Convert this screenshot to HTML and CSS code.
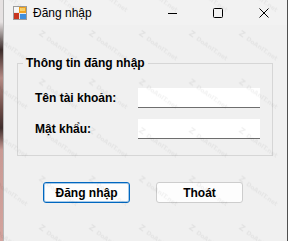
FILE: index.html
```html
<!DOCTYPE html>
<html lang="vi">

<head>
    <meta charset="UTF-8">
    <meta name="viewport" content="width=device-width, initial-scale=1.0">
    <title>Đăng nhập</title>
    <link rel="stylesheet" href="styles.css">
</head>

<body>
    <div class="screen">
        <div class="backdrop"></div>

        <div class="window">
            <div class="titlebar">
                <!-- icon mặc định của form -->
                <svg class="app-icon" viewBox="0 0 14 14" width="14" height="14">
                    <rect x="0.5" y="0.5" width="13" height="13" fill="#e9e9e9" stroke="#9c9c9c" />
                    <rect x="1" y="1" width="5" height="5" fill="#f7f7f7" />
                    <rect x="6" y="1" width="7" height="6" fill="#f2a31f" />
                    <rect x="7" y="2" width="5" height="3" fill="#fbd36a" />
                    <rect x="1" y="7" width="5" height="6" fill="#c8361f" />
                    <rect x="7" y="8" width="6" height="5" fill="#3f8fdd" />
                </svg>
                <span class="title">Đăng nhập</span>

                <div class="caption-buttons">
                    <span class="cap-btn">
                        <svg width="10" height="10" viewBox="0 0 10 10">
                            <path d="M1 5.5h9" stroke="#000" stroke-width="1" />
                        </svg>
                    </span>
                    <span class="cap-btn">
                        <svg width="10" height="10" viewBox="0 0 10 10">
                            <rect x="0.5" y="0.5" width="9" height="9" rx="1" fill="none" stroke="#000" />
                        </svg>
                    </span>
                    <span class="cap-btn">
                        <svg width="10" height="10" viewBox="0 0 10 10">
                            <path d="M0.5 0.5l9 9M9.5 0.5l-9 9" stroke="#000" stroke-width="1" />
                        </svg>
                    </span>
                </div>
            </div>

            <div class="client">
                <fieldset class="group">
                    <legend>Thông tin đăng nhập</legend>

                    <div class="field-row">
                        <label for="username">Tên tài khoản:</label>
                        <input id="username" name="username" autocomplete="off">
                    </div>

                    <div class="field-row">
                        <label for="password">Mật khẩu:</label>
                        <input id="password" name="password" type="password">
                    </div>
                </fieldset>

                <div class="actions">
                    <button type="button" class="btn btn-default">Đăng nhập</button>
                    <button type="button" class="btn">Thoát</button>
                </div>
            </div>
        </div>

        <!-- watermark phủ lên ảnh chụp -->
        <svg class="watermark" width="288" height="241">
            <defs>
                <pattern id="wm" width="50" height="48.5" patternUnits="userSpaceOnUse" x="38" y="24">
                    <g transform="translate(2 8) rotate(35)">
                        <text x="0" y="3" class="wm-logo">Z</text>
                        <text x="9" y="3" class="wm-text">DoAnIT.net</text>
                    </g>
                </pattern>
            </defs>
            <rect width="288" height="241" fill="url(#wm)" />
        </svg>
    </div>
</body>

</html>
```

FILE: styles.css
```css
* {
    box-sizing: border-box;
}

body {
    margin: 0;
    font-family: "Liberation Sans", Arial, sans-serif;
    font-size: 12px;
    color: #000;
}

.screen {
    position: relative;
    display: flex;
    width: 288px;
    height: 241px;
    overflow: hidden;
}

/* phần nền phía sau cửa sổ */
.backdrop {
    width: 3px;
    background: linear-gradient(to bottom, #e6e2e2 0, #e6e2e2 22px, #3b2b29 50px, #b48a84 78px, #6a4a45 110px, #3f2e2c 128px, #c99a94 150px, #d3a39d 241px);
}

.window {
    flex: 1;
    display: flex;
    flex-direction: column;
    background-color: #f0f0f0;
    border-left: 1px solid #b8b8b8;
    border-right: 1px solid #4f4f4f;
}

.titlebar {
    height: 25px;
    display: flex;
    align-items: center;
    background-color: #f2f2f2;
}

.app-icon {
    margin-left: 9px;
    flex-shrink: 0;
}

.title {
    margin-left: 6px;
    line-height: 14px;
}

.caption-buttons {
    margin-left: auto;
    display: flex;
}

.cap-btn {
    width: 46px;
    height: 25px;
    display: flex;
    justify-content: center;
    align-items: center;
}

.client {
    flex: 1;
}

.group {
    margin: 31px 14px 0 13px;
    padding: 18px 10px 16px 5px;
    border: 1px solid #d6d6d6;
    min-width: 0;
}

.group legend {
    padding: 0 3px;
    font-weight: bold;
    line-height: 14px;
}

.field-row {
    display: grid;
    grid-template-columns: 103px 122px;
    align-items: center;
    margin-left: 12px;
}

.field-row+.field-row {
    margin-top: 11px;
}

label {
    font-weight: bold;
    line-height: 14px;
}

input {
    height: 20px;
    width: 122px;
    padding: 0 3px;
    border: none;
    border-bottom: 1px solid #6e6e6e;
    background-color: #fff;
    font-family: inherit;
    font-size: 12px;
    outline: none;
}

.actions {
    display: flex;
    gap: 26px;
    margin-top: 26px;
    padding-left: 39px;
}

.btn {
    width: 87px;
    height: 21px;
    padding: 0;
    border: 1px solid #cdcdcd;
    border-radius: 3px;
    background-color: #fdfdfd;
    font-family: inherit;
    font-size: 12px;
    font-weight: bold;
    color: #000;
}

.btn-default {
    border-color: #0067c0;
    box-shadow: inset 0 0 0 1px rgba(0, 103, 192, 0.35);
}

.watermark {
    position: absolute;
    top: 0;
    left: 0;
    pointer-events: none;
}

.wm-logo {
    font-family: "DejaVu Sans", sans-serif;
    font-size: 8px;
    font-weight: bold;
    fill: rgba(0, 0, 0, 0.06);
}

.wm-text {
    font-family: "DejaVu Sans", sans-serif;
    font-size: 6px;
    font-weight: bold;
    fill: rgba(0, 0, 0, 0.05);
}
```
